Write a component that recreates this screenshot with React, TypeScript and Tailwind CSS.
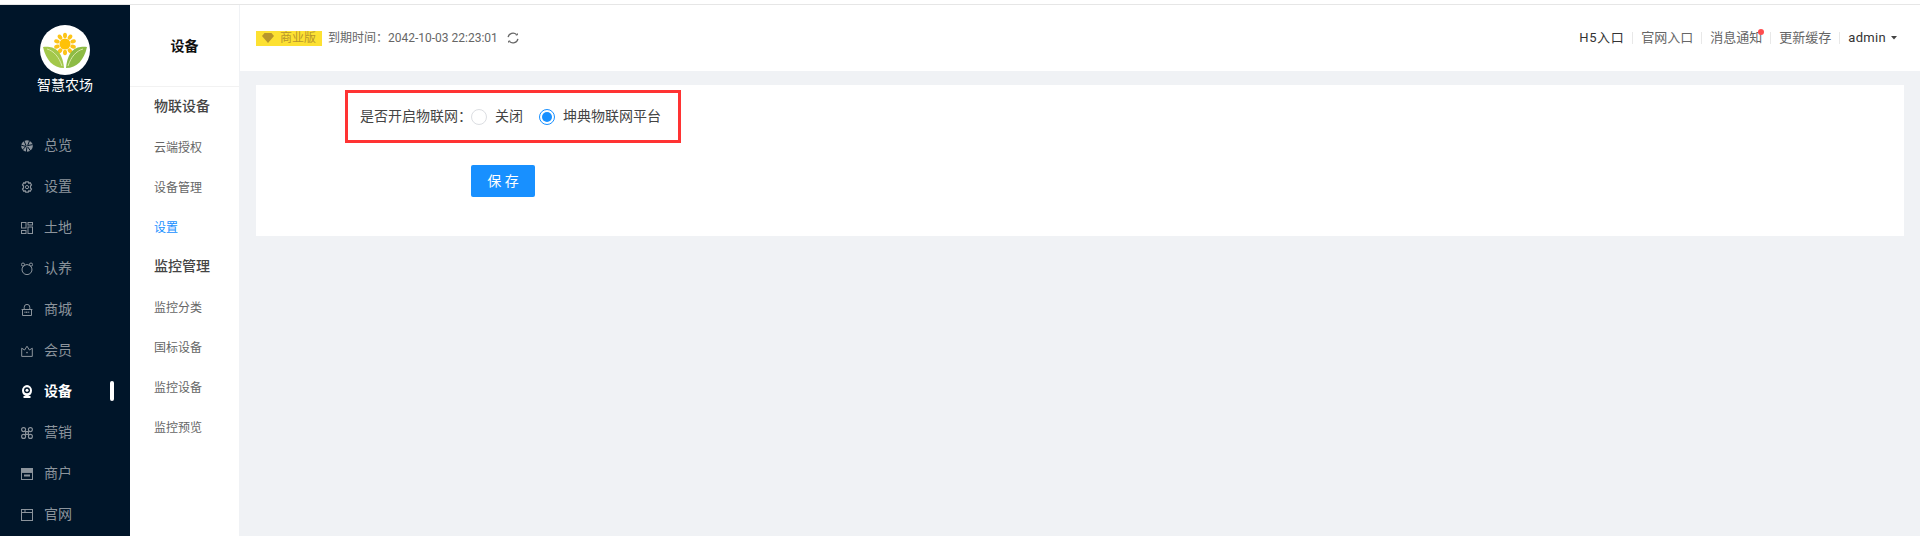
const FONT = "font-['Roboto','Noto_Sans_CJK_SC',sans-serif]";

const NavIcon = ({ name }: { name: string }) => {
  const common = {
    width: 12,
    height: 12,
    viewBox: "0 0 12 12",
    fill: "none",
    stroke: "currentColor",
    strokeWidth: 1,
    className: "shrink-0",
  };
  switch (name) {
    case "总览":
      return (
        <svg {...common}>
          <circle cx="6" cy="6" r="5.8" fill="currentColor" stroke="none" />
          <path d="M3 .8L5.2 6 1.5 10M8.5 .8L6.6 5.6 11.6 4.6M6.6 6.8L9.6 11M.2 5.2L4.8 6.4M5.8 7.2L5.4 12" stroke="#001529" strokeWidth="1" />
        </svg>
      );
    case "设置":
      return (
        <svg {...common}>
          <path d="M4.7.8h2.6l.5 1.4 1.4-.4 1.3 2.2-1 1.1v1.8l1 1.1-1.3 2.2-1.4-.4-.5 1.4H4.7l-.5-1.4-1.4.4-1.3-2.2 1-1.1V5.1L1.5 4l1.3-2.2 1.4.4z" strokeWidth="1.2" />
          <circle cx="6" cy="6.1" r="1.6" />
        </svg>
      );
    case "土地":
      return (
        <svg {...common}>
          <rect x="0.5" y="0.5" width="4.5" height="5.5" />
          <rect x="7" y="0.5" width="4.5" height="2.5" />
          <rect x="0.5" y="8.5" width="4.5" height="3" />
          <rect x="7" y="5" width="4.5" height="6.5" />
        </svg>
      );
    case "认养":
      return (
        <svg {...common} height={14} viewBox="0 0 12 14">
          <circle cx="2" cy="2.6" r="1.6" />
          <circle cx="10" cy="2.6" r="1.6" />
          <path d="M3.3 3.4a4.8 4.8 0 0 1 5.4 0A5 5 0 1 1 3.3 3.4z" />
        </svg>
      );
    case "商城":
      return (
        <svg {...common}>
          <path d="M3.2 5V3.2a2.8 2.8 0 0 1 5.6 0V5" />
          <path d="M.6 5.5h10.8M1.5 5.5v6h9v-6" />
          <path d="M3.5 8.3h5" strokeWidth="1.6" strokeDasharray="1 .6" />
        </svg>
      );
    case "会员":
      return (
        <svg {...common}>
          <path d="M.7 3.2L3.6 5 6 1.2 8.4 5l2.9-1.8v8.2H.7z" />
          <circle cx="6" cy="7.6" r="0.8" fill="currentColor" stroke="none" />
        </svg>
      );
    case "设备":
      return (
        <svg {...common} height={14} viewBox="0 0 12 14">
          <ellipse cx="6" cy="5.6" rx="5" ry="5.6" fill="currentColor" stroke="none" />
          <circle cx="6" cy="5.2" r="3" fill="#001529" stroke="none" />
          <circle cx="6" cy="5.2" r="1.5" fill="currentColor" stroke="none" />
          <path d="M2.5 13h7V11h-7z" fill="currentColor" stroke="none" />
        </svg>
      );
    case "营销":
      return (
        <svg {...common} strokeWidth="1.1">
          <circle cx="2.6" cy="2.6" r="2" />
          <circle cx="9.4" cy="2.6" r="2" />
          <circle cx="2.6" cy="9.4" r="2" />
          <circle cx="9.4" cy="9.4" r="2" />
          <path d="M4.6 4.6h2.8v2.8H4.6z" />
        </svg>
      );
    case "商户":
      return (
        <svg {...common}>
          <rect x="0.5" y="0.5" width="11" height="11" />
          <path d="M.5 1h11v3.4H.5z" fill="currentColor" />
          <path d="M3 7.5h6" strokeWidth="2" />
        </svg>
      );
    default:
      return (
        <svg {...common}>
          <rect x="0.5" y="0.5" width="11" height="11" />
          <path d="M.5 3.5h11M4 .5v3" />
        </svg>
      );
  }
};

const Logo = () => (
  <div className="w-[50px] h-[50px] rounded-full bg-white">
    <svg width="50" height="50" viewBox="0 0 50 50">
      {[0, 36, 72, 108, 144, 180, 216, 252, 288, 324].map((a) => (
        <ellipse key={a} cx="25" cy="10.5" rx="2" ry="2.8" fill="#fcc419" transform={`rotate(${a} 25 19)`} />
      ))}
      <circle cx="25" cy="19" r="5.5" fill="#ffc107" />
      <path d="M3 22c9-1 19 1 21 21-11 0-18-8-21-21z" fill="#a3c84a" />
      <path d="M47 22c-9-1-19 1-21 21 11 0 18-8 21-21z" fill="#8dbb45" />
      <path d="M7 24c7 2 12 8 15 17" stroke="#d9e8a8" strokeWidth="1" fill="none" />
      <path d="M43 24c-7 2-12 8-15 17" stroke="#d9e8a8" strokeWidth="1" fill="none" />
    </svg>
  </div>
);

const MainNav = () => {
  const items = ["总览", "设置", "土地", "认养", "商城", "会员", "设备", "营销", "商户", "官网"];
  return (
    <aside className="w-[130px] shrink-0 bg-[#001529] flex flex-col overflow-hidden">
      <div className="h-[120px] shrink-0 flex flex-col items-center pt-5">
        <Logo />
        <div className="text-[14px] leading-[20px] text-white">智慧农场</div>
      </div>
      <div className="flex flex-col">
        {items.map((item) => {
          const active = item === "设备";
          return (
            <div
              key={item}
              className={`h-[41px] shrink-0 flex items-center pl-[21px] gap-[11px] text-[14px] relative ${
                active ? "text-white font-semibold" : "text-[#8c949c]"
              }`}
            >
              <NavIcon name={item} />
              <span>{item}</span>
              {active && <div className="absolute left-[110px] top-[10px] w-[4px] h-[20px] rounded-sm bg-white" />}
            </div>
          );
        })}
      </div>
    </aside>
  );
};

const SubNav = () => {
  const rows = [
    { label: "物联设备", head: true },
    { label: "云端授权" },
    { label: "设备管理" },
    { label: "设置", active: true },
    { label: "监控管理", head: true },
    { label: "监控分类" },
    { label: "国标设备" },
    { label: "监控设备" },
    { label: "监控预览" },
  ];
  return (
    <aside className="w-[110px] shrink-0 bg-white border-r border-[#f0f2f5] flex flex-col">
      <div className="h-[82px] shrink-0 flex items-center justify-center border-b border-[#f2f2f2] pt-[2px] text-[14px] font-semibold text-[#111]">
        设备
      </div>
      <div className="pt-[1px]">
        {rows.map((r) => (
          <div
            key={r.label}
            className={`h-[40px] pl-[24px] flex items-center ${
              r.head
                ? "text-[14px] font-medium text-[#444] pb-[4px]"
                : r.active
                  ? "text-[12px] text-[#1890ff]"
                  : "text-[12px] text-[#666]"
            }`}
          >
            {r.label}
          </div>
        ))}
      </div>
    </aside>
  );
};

const Header = () => (
  <header className="h-[66px] shrink-0 bg-white flex items-center justify-between pl-4 pr-[23px]">
    <div className="flex items-center text-[12px] text-[#666]">
      <div className="h-[15px] w-[66px] bg-[#fde132] flex items-center pl-[6px] gap-[6px] text-[#b8962b]">
        <svg width="12" height="10" viewBox="0 0 12 10">
          <path d="M2.5 0h7L12 3 6 10 0 3z" fill="#b8962b" />
        </svg>
        <span>商业版</span>
      </div>
      <span className="ml-[6px]">到期时间：2042-10-03 22:23:01</span>
      <svg className="ml-[9px]" width="12" height="12" viewBox="0 0 12 12" fill="none" stroke="#666" strokeWidth="1.3">
        <path d="M1.1 5.2A5 5 0 0 1 9.6 2.6M10.9 6.8A5 5 0 0 1 2.4 9.4" />
        <path d="M10.4 1.4V3H8.8M1.6 10.6V9H3.2" strokeWidth="1" />
      </svg>
    </div>
    <div className="flex items-center text-[13px] text-[#666]">
      <span className="text-[#333] tracking-[0.6px]">H5入口</span>
      <i className="w-px h-3 bg-[#e8e8e8] mx-[8px]" />
      <span>官网入口</span>
      <i className="w-px h-3 bg-[#e8e8e8] mx-[8px]" />
      <span className="relative">
        消息通知
        <b className="absolute -right-[2px] top-[1px] w-[6px] h-[6px] rounded-full bg-[#ff4d4f]" />
      </span>
      <i className="w-px h-3 bg-[#e8e8e8] mx-[8px]" />
      <span>更新缓存</span>
      <i className="w-px h-3 bg-[#e8e8e8] mx-[8px]" />
      <span className="text-[#333] tracking-[0.3px]">admin</span>
      <svg className="ml-[5px]" width="6" height="4" viewBox="0 0 6 4">
        <path d="M0 0h6L3 3.5z" fill="#444" />
      </svg>
    </div>
  </header>
);

const Radio = ({ checked, label }: { checked?: boolean; label: string }) => (
  <div className="flex items-center whitespace-nowrap">
    <span
      className={`w-4 h-4 rounded-full border flex items-center justify-center ${
        checked ? "border-[#1890ff]" : "border-[#dcdee2]"
      }`}
    >
      {checked && <span className="w-[10px] h-[10px] rounded-full bg-[#1890ff]" />}
    </span>
    <span className="ml-[8px]">{label}</span>
  </div>
);

export default function App() {
  return (
    <div className={`${FONT} w-full h-[536px] flex flex-col bg-white overflow-hidden`}>
      <div className="h-[5px] shrink-0 bg-white border-b border-[#e6e6e6]" />
      <div className="flex-1 flex min-h-0">
        <MainNav />
        <SubNav />
        <main className="flex-1 flex flex-col bg-[#f0f2f5] min-w-0">
          <Header />
          <div className="mx-4 mt-[14px] h-[151px] bg-white pt-[5px]">
            <div className="ml-[89px] w-[336px] h-[53px] border-[3px] border-[#ff3333] flex items-center pl-[12px] text-[14px] text-[#444]">
              <span className="w-[111px] shrink-0 whitespace-nowrap">是否开启物联网：</span>
              <div className="flex items-center gap-[16px]">
                <Radio label="关闭" />
                <Radio checked label="坤典物联网平台" />
              </div>
            </div>
            <button className="block mt-[22px] ml-[215px] w-16 h-8 rounded-[2px] bg-[#1890ff] text-white text-[14px]">
              保 存
            </button>
          </div>
        </main>
      </div>
    </div>
  );
}
